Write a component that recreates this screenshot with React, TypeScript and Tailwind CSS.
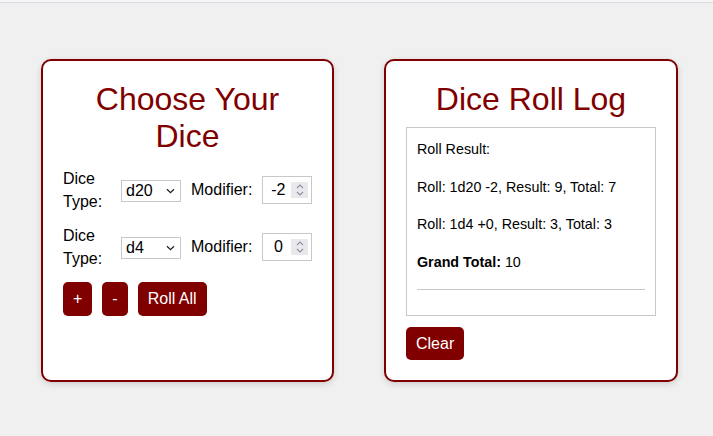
import React from "react";

function Chevron() {
  return (
    <svg width="9" height="6" viewBox="0 0 9 6" className="pointer-events-none absolute right-[6px] top-[9px]">
      <path d="M1 1.2 L4.5 4.6 L8 1.2" fill="none" stroke="#222" strokeWidth="1.3" />
    </svg>
  );
}

function Select({ value, options }: { value: string; options: string[] }) {
  return (
    <div className="relative h-[22px] w-[60px] shrink-0">
      <select
        defaultValue={value}
        className="h-[22px] w-[60px] appearance-none border border-[#c8c8c8] bg-white pl-[4px] text-[16px] leading-[20px] text-black outline-none"
      >
        {options.map((o) => (
          <option key={o} value={o}>
            {o}
          </option>
        ))}
      </select>
      <Chevron />
    </div>
  );
}

function NumberBox({ value }: { value: string }) {
  return (
    <div className="flex h-[28px] w-[50px] shrink-0 items-center border border-[#c8c8c8] bg-white">
      <input
        type="text"
        readOnly
        value={value}
        className="w-[28px] bg-transparent pl-[2px] text-center text-[16px] leading-[18px] text-black outline-none"
      />
      <div className="flex h-[16px] w-[17px] flex-col items-center justify-center gap-[2px] bg-[#e9e9ed]">
        <svg width="8" height="5" viewBox="0 0 8 5">
          <path d="M1 4 L4 1 L7 4" fill="none" stroke="#8f8f9d" strokeWidth="1.1" />
        </svg>
        <svg width="8" height="5" viewBox="0 0 8 5">
          <path d="M1 1 L4 4 L7 1" fill="none" stroke="#8f8f9d" strokeWidth="1.1" />
        </svg>
      </div>
    </div>
  );
}

function DiceRow({ dice, mod, className }: { dice: string; mod: string; className?: string }) {
  return (
    <div className={"flex items-center gap-[10px] " + (className ?? "")}>
      <label className="w-[48px] shrink-0 text-[16px] leading-[23px] text-black">Dice Type:</label>
      <Select value={dice} options={["d4", "d6", "d8", "d10", "d12", "d20"]} />
      <span className="text-[16px] leading-[18px] text-black">Modifier:</span>
      <NumberBox value={mod} />
    </div>
  );
}

function Btn({ children }: { children: React.ReactNode }) {
  return (
    <button className="rounded-[5px] bg-[#800000] px-[10px] py-[8px] text-[16px] leading-[18px] text-white">
      {children}
    </button>
  );
}

export default function App() {
  return (
    <div className="h-[436px] w-full overflow-hidden bg-[#f0f0f0] font-['Liberation_Sans',Arial,sans-serif]">
      <div className="h-[2px] bg-[#f5f5f5]" />
      <div className="h-px bg-[#dcdbe5]" />
      <div className="flex items-stretch gap-[50px] pl-[41px] pt-[56px]">
        <div className="w-[293px] rounded-[10px] border-2 border-[#800000] bg-white p-[20px] shadow-[0_2px_6px_rgba(0,0,0,0.15)]">
          <h2 className="mb-[12px] text-center text-[32px] leading-[37px] text-[#800000]">Choose Your Dice</h2>
          <DiceRow dice="d20" mod="-2" className="mb-[11px]" />
          <DiceRow dice="d4" mod="0" className="mb-[12px]" />
          <div className="flex gap-[10px]">
            <Btn>+</Btn>
            <Btn>-</Btn>
            <Btn>Roll All</Btn>
          </div>
        </div>
        <div className="w-[294px] rounded-[10px] border-2 border-[#800000] bg-white p-[20px] shadow-[0_2px_6px_rgba(0,0,0,0.15)]">
          <h2 className="mb-[9px] text-center text-[32px] leading-[37px] text-[#800000]">Dice Roll Log</h2>
          <div className="border border-[#c8c8c8] px-[10px] pt-[10px] pb-[10px] text-[14.3px] leading-[23px] text-black">
            <div className="flex flex-col gap-[14.7px]">
              <p>Roll Result:</p>
              <p>Roll: 1d20 -2, Result: 9, Total: 7</p>
              <p>Roll: 1d4 +0, Result: 3, Total: 3</p>
              <p>
                <strong className="font-bold">Grand Total:</strong> 10
              </p>
            </div>
            <hr className="my-[15px] border-t border-[#c8c8c8]" />
          </div>
          <button className="mt-[11px] rounded-[5px] bg-[#800000] px-[10px] py-[8px] text-[16px] leading-[17px] text-white">
            Clear
          </button>
        </div>
      </div>
    </div>
  );
}
